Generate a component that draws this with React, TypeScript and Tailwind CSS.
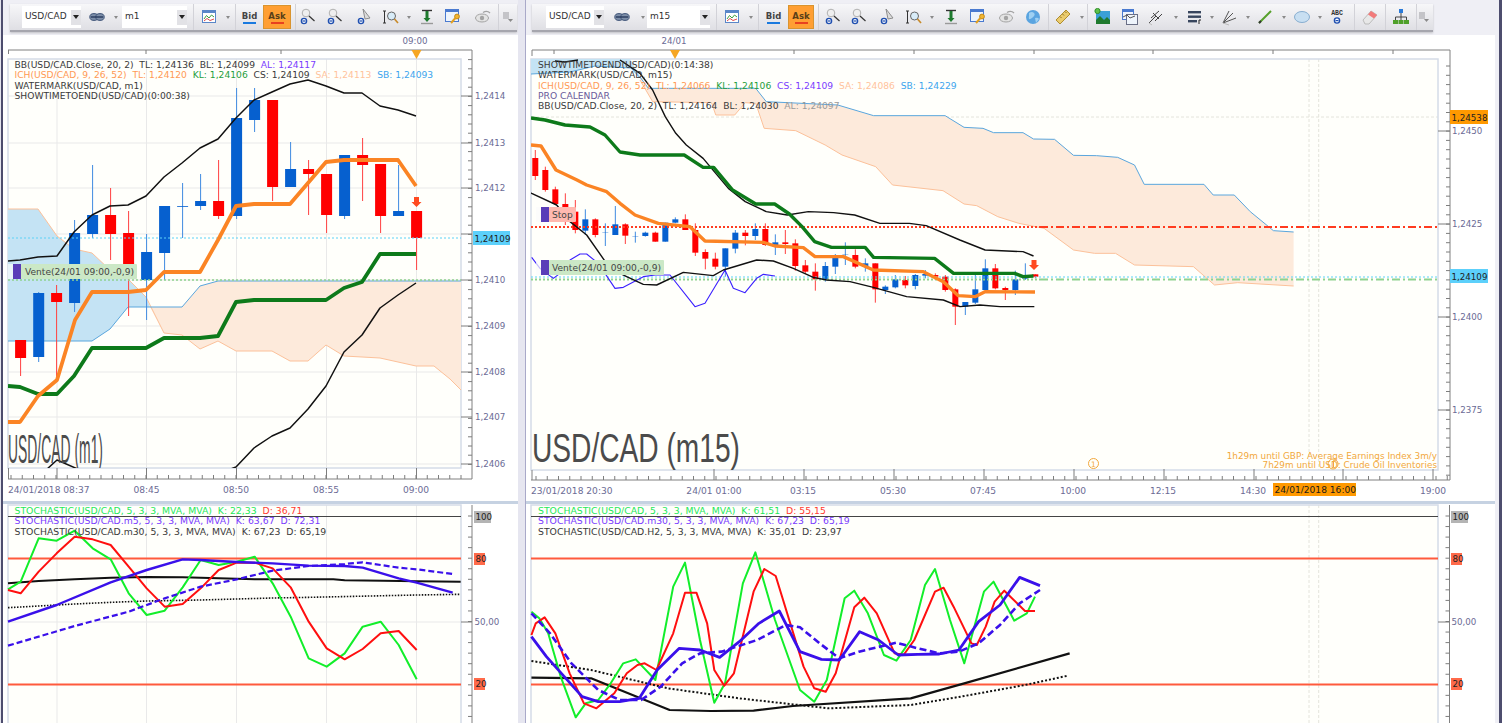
import type { ReactNode } from "react";

type Pt = [number, number];
type Candle = [number, "r" | "b", number, number, number, number];

const AXIS = "#6b6b95";
const font = "DejaVu Sans";

const z6 = (pts: Pt[]) => pts.map(([x, y]) => [530 + x / 3, 180 + y / 3] as Pt);
const z8 = (pts: Pt[]) => pts.map(([x, y]) => [x / 3, 500 + y / 3] as Pt);
const z9 = (pts: Pt[]) => pts.map(([x, y]) => [525 + x / 2.8, 500 + y / 3] as Pt);
const z11 = (pts: Pt[]) => pts.map(([x, y]) => [640 + x / 2.376, 60 + y / 3] as Pt);
const str = (pts: Pt[]) => pts.map((p) => p.join(",")).join(" ");

const leftCandles: Candle[] = [
  [20.6, "r", 341, 340, 358, 376], [38.7, "b", 292, 293, 357, 362], [56.6, "r", 285, 293, 302, 377],
  [74.6, "b", 220, 233, 303, 312], [92.6, "b", 165, 215, 234, 238], [110.6, "r", 188, 215, 234, 260],
  [128.6, "r", 211, 233, 264, 316], [146.6, "b", 234, 252, 280, 320], [164.6, "b", 206, 206, 253, 280],
  [182.6, "b", 183, 206, 206.8, 238], [200.6, "b", 174, 201, 206, 210], [218.6, "r", 160, 201, 216, 219],
  [236.6, "b", 88, 118, 216, 219], [254.6, "b", 88, 100, 120, 132], [272.6, "r", 100, 100, 187, 201],
  [290.6, "b", 142, 169, 187, 187], [308.6, "r", 160, 169, 174, 215], [326.6, "r", 174, 174, 215, 233],
  [344.6, "b", 155, 155, 216, 219], [362.6, "r", 138, 155, 165, 201], [380.6, "r", 164, 164, 216, 233],
  [398.6, "b", 165, 211, 216, 216], [416.6, "r", 211, 211, 238, 270],
];

const rightRaw: Candle[] = [
  [46, "r", -40, -30, 30, 35], [76, "r", 20, 28, 72, 75], [106, "r", 40, 72, 100, 135], [136, "r", 60, 95, 150, 160],
  [166, "b", 88, 118, 152, 165], [196, "r", 115, 118, 165, 172], [226, "b", 130, 158, 159, 198], [256, "b", 78, 133, 165, 165],
  [286, "r", 130, 133, 167, 192], [316, "b", 155, 168, 169, 188], [346, "b", 155, 158, 168, 170], [376, "r", 155, 158, 185, 185],
  [406, "b", 128, 128, 185, 185], [436, "b", 112, 118, 128, 130], [466, "r", 103, 118, 150, 150], [496, "r", 130, 150, 218, 228],
  [526, "r", 208, 216, 236, 268], [556, "r", 218, 236, 260, 268], [586, "b", 205, 205, 260, 290], [616, "b", 150, 158, 206, 220],
  [646, "r", 150, 158, 168, 196], [676, "b", 130, 147, 168, 180], [706, "r", 130, 147, 195, 198], [736, "b", 163, 187, 195, 225],
  [766, "r", 150, 187, 192, 222], [796, "r", 178, 190, 258, 272], [826, "r", 240, 256, 275, 282], [856, "r", 250, 275, 298, 332],
  [886, "b", 246, 258, 298, 305], [916, "b", 222, 232, 260, 282], [946, "b", 187, 223, 224, 255], [976, "r", 208, 225, 260, 265],
  [1006, "b", 235, 250, 260, 275], [1036, "r", 250, 250, 328, 368], [1066, "b", 316, 320, 330, 342], [1096, "b", 285, 298, 322, 325],
  [1126, "r", 288, 300, 316, 325], [1156, "b", 282, 285, 318, 328], [1186, "b", 270, 282, 287, 295], [1216, "r", 280, 285, 290, 300],
  [1246, "r", 285, 290, 330, 335], [1276, "r", 325, 328, 380, 435], [1306, "b", 366, 366, 380, 405], [1336, "b", 285, 328, 368, 372],
  [1366, "b", 238, 265, 330, 335], [1396, "r", 252, 265, 325, 328], [1426, "r", 320, 324, 330, 360], [1456, "b", 272, 298, 330, 345],
  [1486, "b", 250, 285, 296, 300], [1516, "r", 283, 283, 290, 295],
];
const rightCandles: Candle[] = [
  [535.3, "r", 150, 158, 176, 180],
  ...rightRaw.map(([x, c, a, b, d, e]) => [530 + x / 3, c, 180 + a / 3, 180 + b / 3, 180 + d / 3, 180 + e / 3] as Candle),
];

function Line({ pts, color, w = 1.2, dash }: { pts: Pt[]; color: string; w?: number; dash?: string }) {
  return (
    <polyline
      points={str(pts)}
      fill="none"
      stroke={color}
      strokeWidth={w}
      strokeDasharray={dash}
      strokeLinejoin="round"
    />
  );
}

function Candles({ data, w }: { data: Candle[]; w: number }) {
  return (
    <>
      {data.map(([x, c, wt, top, bot, wb]) => (
        <g key={x}>
          <line x1={x} x2={x} y1={wt} y2={wb} stroke={c === "r" ? "#ff4040" : "#3f8be0"} strokeWidth="1" />
          <rect x={x - w / 2} y={top} width={w} height={bot - top} fill={c === "r" ? "#ff0000" : "#0660cf"} />
        </g>
      ))}
    </>
  );
}

function Txt({ x, y, children, anchor, fill = AXIS, size = 8.7 }: { x: number; y: number; children: ReactNode; anchor?: "middle" | "end"; fill?: string; size?: number }) {
  return (
    <text x={x} y={y} textAnchor={anchor} fill={fill} fontSize={size} fontFamily={font}>
      {children}
    </text>
  );
}

function Tag({ x, y, w, h = 13, bg, label, fill = "#222", size }: { x: number; y: number; w: number; h?: number; bg: string; label: string; fill?: string; size?: number }) {
  return (
    <g>
      <rect x={x} y={y} width={w} height={h} fill={bg} />
      <Txt x={x + 1.5} y={y + h - 3.5} fill={fill} size={size}>{label}</Txt>
    </g>
  );
}

function range(from: number, to: number, step: number) {
  const out: number[] = [];
  for (let v = from; v <= to; v += step) out.push(v);
  return out;
}

function Ticks({ ax, plotR, ys, major, xs, bottom, majorX, top, topX }: { ax: number; plotR: number; ys: number[]; major: number[]; xs?: number[]; bottom?: number; majorX?: number[]; top?: number; topX?: number[] }) {
  return (
    <g stroke="#7d7d7d" strokeWidth="1">
      {ys.map((y) => <line key={y} x1={ax - 4} x2={ax} y1={y} y2={y} />)}
      {major.map((y) => <line key={y} x1={plotR} x2={ax} y1={y} y2={y} />)}
      {bottom !== undefined && xs?.map((x) => <line key={x} x1={x} x2={x} y1={bottom - 4} y2={bottom} />)}
      {bottom !== undefined && majorX?.map((x) => <line key={x} x1={x} x2={x} y1={bottom - 11} y2={bottom} />)}
      {top !== undefined && topX?.map((x) => <line key={x} x1={x} x2={x} y1={top} y2={top + 4} />)}
    </g>
  );
}

function SellArrow({ x, y }: { x: number; y: number }) {
  return <polygon points={`${x - 2.5},${y} ${x + 2.5},${y} ${x + 2.5},${y + 5} ${x + 5},${y + 5} ${x},${y + 10} ${x - 5},${y + 5} ${x - 2.5},${y + 5}`} fill="#ff4a20" />;
}

function Marker({ x, y, textX, w, bg, label }: { x: number; y: number; textX: number; w: number; bg: string; label: string }) {
  return (
    <g>
      <rect x={x - 5} y={y} width={5} height={15} fill="#fbfbfb" opacity=".7" />
      <rect x={x} y={y} width={8} height={15} fill="#5a3db8" />
      <rect x={x + 8} y={y} width={w} height={15} fill={bg} rx="1" />
      <Txt x={textX} y={y + 11} fill="#444" size={9.1}>{label}</Txt>
    </g>
  );
}

/* left chart series */
const lUpper: Pt[] = [[8, 261], [20, 260], [38, 257], [57, 256], [74, 232], [92, 215], [110, 206], [128, 205], [146, 196], [164, 177], [182, 163], [200, 148], [218, 139], [236, 118], [254, 100], [272, 92], [290, 84], [308, 80], [326, 86], [344, 93], [362, 93], [380, 106], [398, 110], [416, 116]];
const lLower: Pt[] = [[228, 470], [236, 467], [254, 448], [272, 436], [290, 428], [308, 409], [326, 386], [344, 352], [362, 335], [380, 308], [398, 295], [416, 283]];
const lOrange: Pt[] = [[8, 422], [20, 422], [38, 396], [57, 380], [75, 320], [92, 292], [110, 292], [128, 292], [146, 290], [164, 272], [182, 272], [200, 272], [218, 240], [236, 206], [254, 204], [272, 204], [290, 204], [308, 183], [326, 162], [344, 160], [362, 160], [380, 160], [398, 160], [416, 186]];
const lGreen: Pt[] = [[8, 386], [20, 387], [38, 394], [57, 394], [74, 376], [92, 348], [110, 348], [128, 348], [146, 348], [164, 338], [182, 338], [200, 338], [218, 336], [236, 302], [254, 300], [272, 300], [290, 300], [308, 300], [326, 300], [344, 288], [362, 282], [380, 254], [398, 254], [416, 254]];
const lSA: Pt[] = [[8, 209], [38, 209], [57, 236], [74, 249], [92, 253], [110, 270], [128, 279], [146, 297], [164, 333], [182, 335], [200, 349], [218, 341], [236, 351], [272, 351], [290, 361], [308, 361], [326, 345], [344, 356], [380, 358], [416, 366], [434, 366], [450, 379], [461, 390]];
const lSB: Pt[] = [[8, 341], [92, 341], [110, 329], [128, 307], [182, 307], [200, 286], [218, 281], [461, 281]];

/* right chart series */
const rOrange: Pt[] = [[531, 145], [541, 146], [556, 170], [577, 180], ...z6([[170, 15], [230, 35], [270, 70], [315, 105], [385, 130], [480, 140], [525, 183], [700, 187], [735, 198], [820, 203], [855, 230], [940, 230], [1030, 270], [1180, 275], [1240, 305], [1285, 347], [1335, 350], [1365, 335], [1515, 336]])];
const rGreen: Pt[] = [[531, 118], [545, 120], [565, 125], [590, 127], [605, 135], [620, 152], [640, 155], ...z11([[105, 285], [150, 322], [175, 322], [220, 390], [275, 432], [320, 432], [355, 462], [385, 500], [415, 545], [455, 562], [535, 562], [555, 592], [700, 595], [745, 640], [890, 640], [910, 650], [935, 648]])];
const rUpper: Pt[] = [[620, 60], ...z11([[0, 40], [30, 90], [60, 170], [85, 220], [110, 255], [150, 295], [180, 340], [210, 385], [250, 425], [300, 455], [350, 465], [400, 455], [460, 458], [510, 465], [570, 490], [640, 490], [680, 497], [760, 540], [820, 570], [910, 575], [935, 588]])];
const rLower: Pt[] = [[531, 193], ...z6([[5, 40], [80, 75], [120, 125], [170, 165], [240, 265], [290, 290], [340, 313], [380, 315], [460, 277], [550, 287], [580, 270], [680, 240], [730, 243], [790, 265], [850, 292], [890, 300], [960, 305], [1030, 322], [1130, 350], [1240, 360], [1290, 380], [1350, 375], [1410, 380], [1513, 380]])];
const rChikou = z6([[5, 232], [30, 265], [70, 295], [90, 280], [120, 240], [150, 222], [170, 222], [205, 250], [255, 325], [280, 322], [340, 290], [375, 285], [420, 285], [495, 380], [525, 370], [585, 270], [610, 325], [645, 338], [680, 295], [700, 283], [735, 288]]);
const rSB: Pt[] = [[640, 77], ...z11([[20, 85], [275, 85], [300, 125], [470, 135], [555, 167], [725, 167], [770, 202], [815, 205], [840, 218], [910, 218], [935, 237], [985, 238], [1030, 286], [1085, 287], [1135, 292], [1175, 315], [1198, 373], [1340, 373], [1362, 405], [1412, 405], [1450, 455], [1505, 512], [1553, 516]])];
const rSA = z11([[0, 60], [30, 125], [170, 128], [180, 165], [225, 165], [250, 128], [275, 130], [295, 205], [370, 212], [440, 255], [480, 285], [560, 320], [600, 375], [720, 392], [770, 432], [800, 437], [850, 470], [900, 490], [960, 505], [1030, 570], [1080, 580], [1130, 580], [1175, 615], [1315, 620], [1365, 675], [1420, 668], [1553, 678]]);

function LeftMain() {
  const ys = range(59, 468, 9.2).map((v) => v + 0.6);
  return (
    <svg className="block w-full h-full" viewBox="3 35 515 466">
      <defs><clipPath id="lp"><rect x="8" y="59" width="453" height="409" /></clipPath></defs>
      <rect x="8" y="59" width="453" height="409" fill="#fffffb" />
      <g stroke="#e9e9e9" strokeWidth="1">
        {[57, 146.5, 236.5, 326.5, 416.5].map((x) => <line key={x} x1={x} x2={x} y1={59} y2={468} />)}
        {[96, 143, 188, 234, 280, 326, 372, 417, 464].map((y) => <line key={y} x1={8} x2={461} y1={y} y2={y} />)}
      </g>
      <rect x="8" y="59" width="453" height="409" fill="none" stroke="#d5dce8" strokeWidth="1.5" />
      <g stroke="#808080">
        <line x1="8" x2="472" y1="50" y2="50" />
        <line x1="472" x2="472" y1="50" y2="479" />
        <line x1="8" x2="472" y1="479" y2="479" />
        <line x1="8.5" x2="8.5" y1="50" y2="54" />
        <line x1="8.5" x2="8.5" y1="468" y2="479" />
      </g>
      <g clipPath="url(#lp)">
        <polygon points={str([...lSA.slice(0, 8), [150, 307], ...[...lSB.slice(0, 4)].reverse()])} fill="#c4e3f4" />
        <polygon points={str([[150, 307], ...lSA.slice(8), ...[...lSB.slice(4)].reverse()])} fill="#fdeadb" />
        <Line pts={lSA} color="#fcc19a" w={1} />
        <Line pts={lSB} color="#5aa6dd" w={1} />
        <Candles data={leftCandles} w={11} />
        <line x1="8" x2="461" y1="238" y2="238" stroke="#5cd2f7" strokeWidth="1" strokeDasharray="2 2" />
        <line x1="8" x2="461" y1="280" y2="280" stroke="#8fd28f" strokeWidth="1.5" strokeDasharray="2 2" />
        <Line pts={lUpper} color="#111" w={1.5} />
        <Line pts={lLower} color="#111" w={1.5} />
        <Line pts={[[46, 470], [57, 460], [80, 470]]} color="#111" w={1.5} />
        <Line pts={lGreen} color="#0d7a1a" w={3.8} />
        <Line pts={lOrange} color="#fb8424" w={3.8} />
        <text x="8" y="463" fontSize="41" fontFamily="Liberation Sans" fill="#4b4b4b" textLength="95" lengthAdjust="spacingAndGlyphs">USD/CAD (m1)</text>
      </g>
      <SellArrow x={416.5} y={197} />
      <Marker x={13} y={264} textX={25} w={116} bg="#cbe8c6" label="Vente(24/01 09:00,-0,9)" />
      <Ticks ax={472} plotR={461} ys={ys} major={[96, 143, 188, 234, 280, 326, 372, 417, 464]} xs={range(11, 472, 11.25)} bottom={479} majorX={[57, 146.5, 236.5, 326.5, 416.5]} top={50} topX={[146, 281]} />
      <polygon points="411.5,50 421.5,50 416.5,59" fill="#f6a623" />
      <Txt x={415} y={44} anchor="middle">09:00</Txt>
      {[["1,2414", 99], ["1,2413", 146], ["1,2412", 191], ["1,2410", 283], ["1,2409", 329], ["1,2408", 375], ["1,2407", 420], ["1,2406", 467]].map(([t, y]) => (
        <Txt key={t} x={475} y={y as number}>{t}</Txt>
      ))}
      <Tag x={473} y={231} w={37} h={14} bg="#5cd0fb" label="1,24109" />
      <Txt x={8} y={493} size={9.1}>24/01/2018 08:37</Txt>
      {[["08:45", 146.5], ["08:50", 236], ["08:55", 326], ["09:00", 416]].map(([t, x]) => (
        <Txt key={t} x={x as number} y={493} anchor="middle" size={9.1}>{t}</Txt>
      ))}
    </svg>
  );
}

function RightMain() {
  const ys = range(66, 478, 9.3);
  return (
    <svg className="block w-full h-full" viewBox="526 35 969 466">
      <defs><clipPath id="rp"><rect x="531" y="59" width="907" height="411" /></clipPath></defs>
      <rect x="531" y="59" width="907" height="411" fill="#fffffb" />
      <g stroke="#e4e4dc" strokeWidth="1" strokeDasharray="3 2">
        <line x1="531" x2="1438" y1="117" y2="117" />
        <line x1="1309" x2="1309" y1="59" y2="470" />
        <line x1="1318.7" x2="1318.7" y1="59" y2="470" />
      </g>
      <rect x="531" y="59" width="907" height="411" fill="none" stroke="#d5dce8" strokeWidth="1.5" />
      <g clipPath="url(#rp)">
        <polygon points="531,59 630,59 642,80 631,68 595,66 570,72 531,74" fill="#c4e3f4" />
        <polyline points="531,74 570,72 595,66 631,68 642,80" fill="none" stroke="#5aa6dd" />
        <polygon points={str([...rSB, ...[...rSA].reverse()])} fill="#fdeadb" />
        <Line pts={rSA} color="#fcc19a" w={1} />
        <Line pts={rSB} color="#5aa6dd" w={1} />
        <Candles data={rightCandles} w={6} />
        <line x1="531" x2="1438" y1="277" y2="277" stroke="#5cd2f7" strokeWidth="1" strokeDasharray="2 2" />
        <line x1="531" x2="1040" y1="227" y2="227" stroke="#ff3b1f" strokeWidth="2" strokeDasharray="2 2" />
        <line x1="1040" x2="1438" y1="227" y2="227" stroke="#ff3b1f" strokeWidth="2" strokeDasharray="8 3 2 3" />
        <line x1="531" x2="1040" y1="279.5" y2="279.5" stroke="#8fd28f" strokeWidth="2" strokeDasharray="2 2" />
        <line x1="1040" x2="1438" y1="279.5" y2="279.5" stroke="#8fd28f" strokeWidth="2" strokeDasharray="8 3 2 3" />
        <Line pts={rChikou} color="#3a1fff" w={1.1} />
        <Line pts={rUpper} color="#111" w={1.4} />
        <Line pts={rLower} color="#111" w={1.4} />
        <Line pts={[[555, 61], [565, 62], [578, 60]]} color="#111" w={1.4} />
        <Line pts={rGreen} color="#0d7a1a" w={3.4} />
        <Line pts={rOrange} color="#fb8424" w={3.4} />
        <text x="532" y="462" fontSize="41" fontFamily="Liberation Sans" fill="#4b4b4b" textLength="208" lengthAdjust="spacingAndGlyphs">USD/CAD (m15)</text>
      </g>
      <SellArrow x={1034} y={260} />
      <Marker x={541} y={207} textX={552} w={27} bg="#ffb9b0" label="Stop" />
      <Marker x={541} y={260} textX={552} w={115} bg="#cbe8c6" label="Vente(24/01 09:00,-0,9)" />
      <circle cx="1093.5" cy="463.5" r="5" fill="none" stroke="#f2a83c" />
      <Txt x={1093.5} y={466.5} anchor="middle" fill="#f2a83c" size={7.5}>1</Txt>
      <Txt x={1437} y={459} anchor="end" fill="#f2a83c" size={8.85}>1h29m until GBP: Average Earnings Index 3m/y</Txt>
      <Txt x={1437} y={468} anchor="end" fill="#f2a83c" size={8.85}>7h29m until USD: Crude Oil Inventories</Txt>
      <circle cx="1333" cy="464" r="5" fill="none" stroke="#f2a83c" />
      <path d="M1332 462L1333.5 461V467" fill="none" stroke="#f2a83c" />
      <line x1="532" x2="1450" y1="50" y2="50" stroke="#808080" />
      <line x1="1450" x2="1450" y1="50" y2="480" stroke="#808080" />
      <line x1="531" x2="1450" y1="480" y2="480" stroke="#808080" />
      <line x1="532" x2="532" y1="50" y2="56" stroke="#808080" />
      <line x1="532" x2="532" y1="470" y2="480" stroke="#808080" />
      <Ticks ax={1450} plotR={1438} ys={ys} major={[131, 224, 317, 410]} xs={range(536, 1450, 11.25)} bottom={480} majorX={[714, 804, 894, 984, 1074, 1164, 1254, 1343, 1433]} top={50} topX={[554, 794, 914, 1034, 1153, 1273, 1393]} />
      <polygon points="670,50 680,50 675,59" fill="#f6a623" />
      <Txt x={674} y={44} anchor="middle">24/01</Txt>
      {[["1,2450", 134], ["1,2425", 227], ["1,2400", 320], ["1,2375", 413]].map(([t, y]) => (
        <Txt key={t} x={1452} y={y as number}>{t}</Txt>
      ))}
      <Tag x={1450} y={110} w={38} h={14} bg="#ff9900" label="1,24538" />
      <Tag x={1450} y={269} w={38} h={14} bg="#5cd0fb" label="1,24109" />
      <Txt x={531} y={494} size={9.1}>23/01/2018 20:30</Txt>
      {[["24/01 01:00", 714], ["03:15", 803], ["05:30", 893], ["07:45", 983], ["10:00", 1073], ["12:15", 1163], ["14:30", 1253], ["19:00", 1433]].map(([t, x]) => (
        <Txt key={t} x={x as number} y={494} anchor="middle" size={9.1}>{t}</Txt>
      ))}
      <Tag x={1273} y={483} w={83} bg="#ff9900" label="24/01/2018 16:00" fill="#1a1a1a" size={9.1} />
    </svg>
  );
}

function SubChart({ view, plotX, plotW, ax, labelX, children, grid }: { view: string; plotX: number; plotW: number; ax: number; labelX: number; children: ReactNode; grid?: ReactNode }) {
  const r = plotX + plotW;
  const ys = range(516, 723, 10.55);
  return (
    <svg className="block w-full h-full" viewBox={view}>
      <rect x={plotX} y="505" width={plotW} height="220" fill="#fffffb" />
      {grid}
      <rect x={plotX} y="505" width={plotW} height="220" fill="none" stroke="#d5dce8" strokeWidth="1.5" />
      <line x1={plotX} x2={r} y1="516.5" y2="516.5" stroke="#444" />
      <line x1={plotX} x2={r} y1="558.5" y2="558.5" stroke="#ff5a3c" strokeWidth="2" />
      <line x1={plotX} x2={r} y1="684.5" y2="684.5" stroke="#ff5a3c" strokeWidth="2" />
      {children}
      <line x1={ax} x2={ax} y1="505" y2="723" stroke="#808080" />
      <Ticks ax={ax} plotR={r} ys={ys} major={[622]} />
      <Tag x={labelX} y={511} w={17} h={12} bg="#b4b4b4" label="100" />
      <Tag x={labelX} y={553} w={11} h={12} bg="#ff6a4a" label="80" />
      <Tag x={labelX} y={678} w={11} h={12} bg="#ff6a4a" label="20" />
      <Txt x={labelX + 0.5} y={625}>50,00</Txt>
    </svg>
  );
}

function LeftSub() {
  return (
    <SubChart
      view="3 504 515 219"
      plotX={8}
      plotW={453}
      ax={472}
      labelX={474}
      grid={
        <g stroke="#e9e9e9">
          {[57, 146.5, 236.5, 326.5, 416.5].map((x) => <line key={x} x1={x} x2={x} y1={505} y2={723} />)}
          <line x1="8" x2="461" y1="622" y2="622" />
        </g>
      }
    >
      <Line pts={z8([[24, 250], [116, 243], [224, 238], [332, 233], [440, 231], [548, 232], [656, 235], [764, 238], [1000, 238], [1034, 241], [1150, 242], [1250, 244], [1382, 245]])} color="#111" w={2} />
      <Line pts={z8([[24, 323], [116, 318], [224, 312], [332, 307], [440, 303], [602, 300], [818, 294], [926, 292], [1112, 288], [1250, 285], [1382, 283]])} color="#111" w={1.6} dash="1.5 1.5" />
      <Line pts={z8([[24, 268], [62, 245], [116, 115], [170, 122], [224, 92], [278, 145], [332, 178], [386, 280], [440, 345], [494, 332], [548, 262], [602, 180], [656, 195], [710, 185], [764, 170], [818, 250], [872, 350], [926, 475], [980, 500], [1034, 460], [1088, 380], [1142, 365], [1196, 435], [1250, 538]])} color="#12ee2a" w={2} />
      <Line pts={z8([[24, 270], [62, 280], [116, 215], [170, 160], [224, 110], [278, 118], [332, 135], [386, 200], [440, 265], [494, 320], [548, 312], [602, 265], [656, 210], [710, 188], [764, 188], [818, 205], [872, 262], [926, 365], [980, 445], [1034, 478], [1088, 447], [1142, 400], [1196, 393], [1250, 450]])} color="#ff0f0f" w={2} />
      <Line pts={z8([[24, 365], [170, 315], [332, 247], [440, 210], [548, 178], [602, 180], [710, 186], [818, 190], [926, 197], [1034, 198], [1088, 203], [1196, 235], [1250, 248], [1358, 278]])} color="#3a10ea" w={2.4} />
      <Line pts={z8([[24, 437], [224, 378], [386, 335], [494, 295], [602, 260], [710, 238], [818, 212], [926, 198], [1034, 192], [1088, 187], [1196, 203], [1250, 208], [1358, 222]])} color="#3a10ea" w={2.2} dash="6 3" />
    </SubChart>
  );
}

function RightSub() {
  return (
    <SubChart
      view="526 504 969 219"
      plotX={531}
      plotW={907}
      ax={1449.5}
      labelX={1451}
      grid={
        <g stroke="#e4e4dc" strokeDasharray="3 2">
          <line x1="1309" x2="1309" y1="505" y2="723" />
          <line x1="1318.7" x2="1318.7" y1="505" y2="723" />
        </g>
      }
    >
      <Line pts={z9([[18, 533], [185, 535], [405, 630], [520, 633], [640, 632], [750, 618], [1080, 595], [1220, 553], [1525, 460]])} color="#111" w={2.2} />
      <Line pts={z9([[18, 483], [185, 510], [400, 565], [600, 595], [850, 625], [1080, 615], [1220, 590], [1400, 555], [1520, 527]])} color="#111" w={2} dash="2 2" />
      <Line pts={z9([[18, 335], [40, 355], [65, 400], [100, 530], [142, 652], [170, 610], [205, 600], [240, 550], [275, 490], [310, 478], [365, 540], [415, 260], [448, 188], [490, 420], [530, 608], [560, 550], [610, 250], [645, 157], [700, 360], [770, 570], [810, 605], [845, 540], [895, 295], [922, 272], [960, 340], [1005, 465], [1040, 482], [1080, 420], [1120, 255], [1148, 207], [1190, 360], [1230, 490], [1285, 275], [1312, 245], [1370, 362], [1405, 340], [1428, 290]])} color="#12ee2a" w={2} />
      <Line pts={z9([[18, 405], [30, 370], [55, 352], [85, 400], [125, 520], [165, 610], [200, 625], [250, 580], [285, 520], [315, 495], [335, 490], [368, 510], [415, 400], [448, 278], [480, 278], [510, 370], [530, 510], [558, 557], [585, 520], [640, 275], [670, 207], [702, 228], [780, 500], [810, 565], [842, 575], [870, 520], [922, 322], [950, 293], [985, 340], [1035, 460], [1060, 465], [1090, 420], [1148, 275], [1172, 263], [1200, 320], [1250, 430], [1265, 435], [1290, 380], [1315, 305], [1342, 272], [1400, 333], [1428, 333]])} color="#ff0f0f" w={2} />
      <Line pts={z9([[18, 410], [60, 470], [110, 530], [160, 590], [205, 605], [265, 605], [320, 595], [370, 510], [432, 445], [490, 450], [545, 472], [600, 425], [655, 370], [712, 333], [770, 455], [830, 478], [880, 480], [937, 395], [990, 420], [1045, 465], [1100, 463], [1160, 462], [1215, 450], [1270, 365], [1330, 315], [1385, 232], [1442, 257]])} color="#3a10ea" w={2.8} />
      <Line pts={z9([[18, 340], [70, 400], [130, 490], [205, 570], [265, 600], [325, 600], [380, 560], [440, 490], [490, 460], [550, 455], [650, 420], [730, 375], [770, 382], [825, 430], [880, 475], [935, 455], [1040, 428], [1100, 445], [1160, 460], [1215, 455], [1270, 430], [1330, 375], [1385, 310], [1442, 270]])} color="#3a10ea" w={2.6} dash="7 3.5" />
    </SubChart>
  );
}

/* toolbar icons */
function Caret() {
  return <div className="h-0 w-0 border-x-[2.5px] border-t-[3px] border-x-transparent border-t-[#8a8a8a]" />;
}

function Sep() {
  return <div className="h-full w-px shrink-0 bg-[#d2d2d8]" />;
}

function Ico({ children }: { children: ReactNode }) {
  return <svg width="18" height="18" viewBox="0 0 18 18">{children}</svg>;
}

const LinkIco = () => (
  <Ico>
    <ellipse cx="6" cy="9" rx="4.2" ry="3.4" fill="#7d8ea8" stroke="#3f5478" />
    <ellipse cx="12" cy="9" rx="4.2" ry="3.4" fill="#7d8ea8" stroke="#3f5478" />
    <line x1="3" x2="15" y1="9" y2="9" stroke="#26395c" strokeWidth="1.4" />
  </Ico>
);
const ChartIco = () => (
  <Ico>
    <rect x="2.5" y="2.5" width="13" height="12" fill="#fff" stroke="#5a86c8" />
    <rect x="2.5" y="2.5" width="13" height="2.5" fill="#5a86c8" />
    <polyline points="4,11 6.5,7.5 9,10 11.5,7 14,9" fill="none" stroke="#3f9e3f" />
    <polyline points="4,13 7,10.5 10,12.5 14,11" fill="none" stroke="#e04a4a" />
  </Ico>
);
const MagIco = ({ pointer }: { pointer?: boolean }) => (
  <Ico>
    {pointer ? (
      <polygon points="7,1 14,10 9,11" fill="#dcdcdc" stroke="#8d8d8d" />
    ) : (
      <>
        <circle cx="7" cy="5" r="3.8" fill="#efefef" stroke="#b0b0b0" />
        <line x1="10" y1="8" x2="15.5" y2="13" stroke="#333" strokeWidth="1.2" />
      </>
    )}
    <circle cx="5" cy="13" r="2.6" fill="#fff" stroke="#1f4fb0" strokeWidth="1.4" />
    <rect x="3.5" y="12.4" width="3" height="1.2" fill="#1f4fb0" />
  </Ico>
);
const ZoomIco = () => (
  <Ico>
    <line x1="2.5" x2="2.5" y1="3" y2="15" stroke="#333" />
    <line x1="1" x2="4" y1="3" y2="3" stroke="#333" />
    <line x1="1" x2="4" y1="15" y2="15" stroke="#333" />
    <circle cx="9.5" cy="8" r="4" fill="#d8ecf8" stroke="#666" />
    <line x1="12.5" y1="11" x2="16" y2="15" stroke="#c88a2a" strokeWidth="1.6" />
  </Ico>
);
const BeamIco = () => (
  <Ico>
    <line x1="4" x2="14" y1="2.5" y2="2.5" stroke="#333" strokeWidth="1.4" />
    <line x1="3" x2="15" y1="15.5" y2="15.5" stroke="#999" strokeWidth="1.4" />
    <rect x="7.5" y="3" width="3" height="9" fill="#1f7a2e" />
    <polygon points="5.5,10 12.5,10 9,14" fill="#1f7a2e" />
  </Ico>
);
const KeyIco = () => (
  <Ico>
    <rect x="1.5" y="1.5" width="13" height="12" fill="#eef4fc" stroke="#4a7ad0" />
    <rect x="1.5" y="1.5" width="13" height="2.5" fill="#4a7ad0" />
    <circle cx="13" cy="8.5" r="2.4" fill="#f2b632" stroke="#c48a1a" />
    <line x1="11.5" y1="10" x2="7" y2="15" stroke="#e2a020" strokeWidth="2" />
  </Ico>
);
const EyeIco = () => (
  <Ico>
    <ellipse cx="8" cy="10" rx="6.5" ry="4" fill="#e4e4e4" stroke="#a3a3a3" />
    <circle cx="8" cy="10" r="2.2" fill="#a3a3a3" />
    <path d="M9 4.5Q13 2 16 5" fill="none" stroke="#a3a3a3" strokeWidth="1.4" />
  </Ico>
);
const GlobeIco = () => (
  <Ico>
    <circle cx="9" cy="9" r="7" fill="#5aa4e0" />
    <path d="M5 5Q8 3 10 5T8 10T5 8ZM11 10Q14 9 15 11L12 15Z" fill="#9ed0f2" />
  </Ico>
);
const RulerIco = () => (
  <Ico>
    <polygon points="2,12 12,2 16,6 6,16" fill="#eacb6e" stroke="#b08e30" />
    <path d="M6 8.5l1.5 1.5M8.5 6l1.5 1.5M11 3.5l1.5 1.5" stroke="#8a6f22" />
  </Ico>
);
const ImageIco = () => (
  <Ico>
    <rect x="2" y="3" width="14" height="13" fill="#3aa0d8" />
    <polygon points="2,16 2,12 6,8 10,12 13,9 16,12 16,16" fill="#1f7a2e" />
    <circle cx="3.5" cy="3" r="2.6" fill="#5fc24a" stroke="#2f8f2a" />
  </Ico>
);
const WindowsIco = () => (
  <Ico>
    <rect x="1.5" y="1.5" width="11" height="10" fill="#eef4fc" stroke="#4a7ad0" />
    <rect x="1.5" y="1.5" width="11" height="2.5" fill="#4a7ad0" />
    <rect x="5.5" y="6.5" width="11" height="10" fill="#eef4fc" stroke="#6a6f86" />
    <polyline points="2,9 6,7 9,10 14,8" fill="none" stroke="#555" />
  </Ico>
);
const ForkIco = () => (
  <Ico>
    <path d="M2 15L9 8M4 10L12 3M8 13L15 6M6 5L12 11" fill="none" stroke="#444" />
    <path d="M2 15L5 17" stroke="#bbb" />
  </Ico>
);
const LinesIco = () => (
  <Ico>
    <rect x="2" y="3" width="13" height="2.4" fill="#38465e" />
    <rect x="2" y="7.5" width="13" height="2.4" fill="#38465e" />
    <rect x="2" y="12" width="9" height="2.4" fill="#38465e" />
    <path d="M13 16V12H15" fill="none" stroke="#222" />
  </Ico>
);
const FanIco = () => (
  <Ico>
    <path d="M2 15L8 3M2 15L12 5M2 15L15 10" fill="none" stroke="#555" />
    <path d="M2 15L8 17" stroke="#bbb" />
  </Ico>
);
const PenIco = () => (
  <Ico>
    <line x1="3" y1="15" x2="15" y2="3" stroke="#55a02a" strokeWidth="2" />
    <line x1="3" y1="15" x2="5" y2="13" stroke="#333" strokeWidth="2" />
  </Ico>
);
const EllipseIco = () => (
  <Ico>
    <ellipse cx="9" cy="9" rx="7.5" ry="5.5" fill="#c8dff2" stroke="#88aed0" />
  </Ico>
);
const AbcIco = () => (
  <Ico>
    <text x="9" y="7" textAnchor="middle" fontSize="6.5" fontWeight="700" fontFamily="Liberation Mono" fill="#333">ABC</text>
    <circle cx="9" cy="12.5" r="2.6" fill="#fff" stroke="#1f4fb0" strokeWidth="1.4" />
    <rect x="7.5" y="12" width="3" height="1.2" fill="#1f4fb0" />
  </Ico>
);
const EraserIco = () => (
  <Ico>
    <polygon points="2,12 10,3 16,7 8,16 4,16" fill="#e8e8e8" stroke="#bbb" />
    <polygon points="7,6.5 10,3 16,7 13,10.5" fill="#f27a7a" />
  </Ico>
);
const TreeIco = () => (
  <Ico>
    <rect x="7" y="1" width="4" height="4" fill="#2a7ad8" />
    <path d="M9 5V9M3.5 12V9H14.5V12M9 9V12" fill="none" stroke="#444" />
    <rect x="1" y="12" width="5" height="4" fill="#4fa02a" />
    <rect x="6.5" y="12" width="5" height="4" fill="#4fa02a" />
    <rect x="12" y="12" width="5" height="4" fill="#4fa02a" />
  </Ico>
);
const MoreIco = () => (
  <svg width="12" height="12" viewBox="0 0 12 12">
    <rect x="1" y="1" width="6" height="7" fill="#c4c4c8" />
    <polygon points="6,8 11,8 8.5,11" fill="#8a8a8a" />
  </svg>
);

function Combo({ label, className }: { label: string; className: string }) {
  return (
    <div className={`flex h-[22px] shrink-0 items-center justify-between bg-white pl-[3px] text-[9px] text-[#333] ${className}`}>
      <span>{label}</span>
      <span className="flex h-[15px] w-[10px] items-center justify-center bg-[#e2e2e6]">
        <span className="h-0 w-0 border-x-[3.5px] border-t-[4px] border-x-transparent border-t-[#222]" />
      </span>
    </div>
  );
}

function Slot({ className, children }: { className: string; children?: ReactNode }) {
  return <div className={`flex h-full shrink-0 items-center justify-center ${className}`}>{children}</div>;
}

function BidAsk({ bidW, askW }: { bidW: string; askW: string }) {
  return (
    <>
      <Slot className={bidW}>
        <div className="flex flex-col items-center text-[8.5px] font-bold leading-[12px] text-[#444]">
          Bid
          <div className="h-[1.5px] w-[13px] bg-[#1a7adf]" />
        </div>
      </Slot>
      <Slot className={askW}>
        <div className="flex h-[24px] w-full flex-col items-center justify-center border border-[#d9942f] bg-[#ff9f33] text-[8.5px] font-bold leading-[12px] text-[#5a3f18]">
          Ask
          <div className="h-[1.5px] w-[13px] bg-[#e8411f]" />
        </div>
      </Slot>
    </>
  );
}

const barClass = "flex h-[28px] items-center border-b-2 border-[#a6a6ae] bg-gradient-to-b from-[#f7f7f9] to-[#dfdfe4] shadow-[0_1px_2px_rgba(0,0,0,.2)]";

function LeftToolbar() {
  return (
    <div className={`${barClass} w-[507px]`}>
      <Slot className="w-[12px]" />
      <Combo label="USD/CAD" className="w-[59px]" />
      <Slot className="w-[31px]"><LinkIco /></Slot>
      <Slot className="w-[8px]"><Caret /></Slot>
      <Combo label="m1" className="ml-[2px] w-[65px]" />
      <Slot className="w-[6px]" />
      <Sep />
      <Slot className="w-[30px]"><ChartIco /></Slot>
      <Slot className="w-[7px]"><Caret /></Slot>
      <Slot className="w-[4px]" />
      <Sep />
      <BidAsk bidW="w-[27px]" askW="w-[28px]" />
      <Slot className="w-[4px]" />
      <Sep />
      <Slot className="w-[24px]"><MagIco /></Slot>
      <Slot className="w-[30px]"><MagIco /></Slot>
      <Slot className="w-[30px]"><MagIco pointer /></Slot>
      <Slot className="w-[22px]"><ZoomIco /></Slot>
      <Slot className="w-[14px]"><Caret /></Slot>
      <Slot className="w-[22px]"><BeamIco /></Slot>
      <Slot className="w-[30px]"><KeyIco /></Slot>
      <Slot className="w-[30px]"><EyeIco /></Slot>
      <Sep />
      <Slot className="w-[18px]"><MoreIco /></Slot>
    </div>
  );
}

function RightToolbar() {
  return (
    <div className={`${barClass} w-[901px]`}>
      <Slot className="w-[14px]" />
      <Combo label="USD/CAD" className="w-[58px]" />
      <Slot className="w-[36px]"><LinkIco /></Slot>
      <Slot className="w-[6px]"><Caret /></Slot>
      <Combo label="m15" className="ml-px w-[63px]" />
      <Slot className="w-[6px]" />
      <Sep />
      <Slot className="w-[30px]"><ChartIco /></Slot>
      <Slot className="w-[7px]"><Caret /></Slot>
      <Slot className="w-[4px]" />
      <Sep />
      <BidAsk bidW="w-[29px]" askW="w-[26px]" />
      <Slot className="w-[4px]" />
      <Sep />
      <Slot className="w-[27px]"><MagIco /></Slot>
      <Slot className="w-[25px]"><MagIco /></Slot>
      <Slot className="w-[33px]"><MagIco pointer /></Slot>
      <Slot className="w-[19px]"><ZoomIco /></Slot>
      <Slot className="w-[18px]"><Caret /></Slot>
      <Slot className="w-[19px]"><BeamIco /></Slot>
      <Slot className="w-[36px]"><KeyIco /></Slot>
      <Slot className="w-[22px]"><EyeIco /></Slot>
      <Slot className="w-[30px]"><GlobeIco /></Slot>
      <Sep />
      <Slot className="w-[28px]"><RulerIco /></Slot>
      <Slot className="w-[10px]"><Caret /></Slot>
      <Sep />
      <Slot className="w-[30px]"><ImageIco /></Slot>
      <Slot className="w-[24px]"><WindowsIco /></Slot>
      <Slot className="w-[28px]"><ForkIco /></Slot>
      <Slot className="w-[12px]"><Caret /></Slot>
      <Slot className="w-[25px]"><LinesIco /></Slot>
      <Slot className="w-[10px]"><Caret /></Slot>
      <Slot className="w-[26px]"><FanIco /></Slot>
      <Slot className="w-[10px]"><Caret /></Slot>
      <Slot className="w-[24px]"><PenIco /></Slot>
      <Slot className="w-[14px]"><Caret /></Slot>
      <Slot className="w-[22px]"><EllipseIco /></Slot>
      <Slot className="w-[14px]"><Caret /></Slot>
      <Slot className="w-[20px]"><AbcIco /></Slot>
      <Slot className="w-[7px]" />
      <Sep />
      <Slot className="w-[30px]"><EraserIco /></Slot>
      <Sep />
      <Slot className="w-[30px]"><TreeIco /></Slot>
      <Sep />
      <Slot className="w-[13px]"><MoreIco /></Slot>
    </div>
  );
}

function Legend({ className, rows }: { className: string; rows: [string, string][][] }) {
  return (
    <div className={`absolute whitespace-pre leading-[10.3px] ${className}`}>
      {rows.map((row, i) => (
        <div key={i}>
          {row.map(([t, cls]) => <span key={t} className={cls}>{t}</span>)}
        </div>
      ))}
    </div>
  );
}

const DARK = "text-[#3a3a3a]";
const ORANGE = "text-[#ff9a55]";
const KL = "text-[#1f9e3c]";
const PURPLE = "text-[#7a3cff]";
const PEACH = "text-[#ffc39c]";
const SKY = "text-[#3da5ee]";
const LIME = "text-[#1fe85a]";
const RED = "text-[#ff3b30]";

export default function App() {
  return (
    <div className="flex h-[723px] w-[1502px] overflow-hidden bg-[#efeff5] text-[#333] [font-family:'DejaVu_Sans',sans-serif]">
      <div className="w-px shrink-0 bg-[#e4e4ee]" />
      <div className="w-[2px] shrink-0 bg-[#4d4d6e]" />

      <section className="flex w-[515px] shrink-0 flex-col">
        <div className="h-[35px] shrink-0 pl-[7px] pt-[4px]"><LeftToolbar /></div>
        <div className="relative h-[466px] shrink-0 bg-white">
          <LeftMain />
          <Legend
            className="left-[11.5px] top-[25px] text-[9.17px]"
            rows={[
              [["BB(USD/CAD.Close, 20, 2)  TL: 1,24136  BL: 1,24099  ", DARK], ["AL: 1,24117", PURPLE]],
              [["ICH(USD/CAD, 9, 26, 52)  TL: 1,24120  ", ORANGE], ["KL: 1,24106  ", KL], ["CS: 1,24109  ", DARK], ["SA: 1,24113  ", PEACH], ["SB: 1,24093", SKY]],
              [["WATERMARK(USD/CAD, m1)", DARK]],
              [["SHOWTIMETOEND(USD/CAD)(0:00:38)", DARK]],
            ]}
          />
        </div>
        <div className="h-[3px] shrink-0 bg-[#c6d2e2]" />
        <div className="relative min-h-0 flex-1 bg-white">
          <LeftSub />
          <Legend
            className="left-[11.5px] top-[2px] text-[9.3px]"
            rows={[
              [["STOCHASTIC(USD/CAD, 5, 3, 3, MVA, MVA)  K: 22,33  ", LIME], ["D: 36,71", RED]],
              [["STOCHASTIC(USD/CAD.m5, 5, 3, 3, MVA, MVA)  K: 63,67  D: 72,31", PURPLE]],
              [["STOCHASTIC(USD/CAD.m30, 5, 3, 3, MVA, MVA)  K: 67,23  D: 65,19", DARK]],
            ]}
          />
        </div>
      </section>

      <div className="w-[7px] shrink-0 bg-[#e6e6f0]" />
      <div className="w-px shrink-0 bg-[#a9a9c9]" />

      <section className="flex w-[969px] shrink-0 flex-col">
        <div className="h-[35px] shrink-0 pl-[6px] pt-[4px]"><RightToolbar /></div>
        <div className="relative h-[466px] shrink-0 bg-white">
          <RightMain />
          <Legend
            className="left-[12px] top-[25px] text-[9.17px]"
            rows={[
              [["SHOWTIMETOEND(USD/CAD)(0:14:38)", DARK]],
              [["WATERMARK(USD/CAD, m15)", DARK]],
              [["ICH(USD/CAD, 9, 26, 52)  TL: 1,24066  ", ORANGE], ["KL: 1,24106  ", KL], ["CS: 1,24109  ", PURPLE], ["SA: 1,24086  ", PEACH], ["SB: 1,24229", SKY]],
              [["PRO CALENDAR", "text-[#6a5a9a]"]],
              [["BB(USD/CAD.Close, 20, 2)  TL: 1,24164  BL: 1,24030  ", DARK], ["AL: 1,24097", "text-[#9a9a9a]"]],
            ]}
          />
        </div>
        <div className="h-[3px] shrink-0 bg-[#c6d2e2]" />
        <div className="relative min-h-0 flex-1 bg-white">
          <RightSub />
          <Legend
            className="left-[12px] top-[2px] text-[9.3px]"
            rows={[
              [["STOCHASTIC(USD/CAD, 5, 3, 3, MVA, MVA)  K: 61,51  ", LIME], ["D: 55,15", RED]],
              [["STOCHASTIC(USD/CAD.m30, 5, 3, 3, MVA, MVA)  K: 67,23  D: 65,19", PURPLE]],
              [["STOCHASTIC(USD/CAD.H2, 5, 3, 3, MVA, MVA)  K: 35,01  D: 23,97", DARK]],
            ]}
          />
        </div>
      </section>

      <div className="min-w-0 flex-1" />
      <div className="w-[3px] shrink-0 bg-[#4d4d6e]" />
    </div>
  );
}
